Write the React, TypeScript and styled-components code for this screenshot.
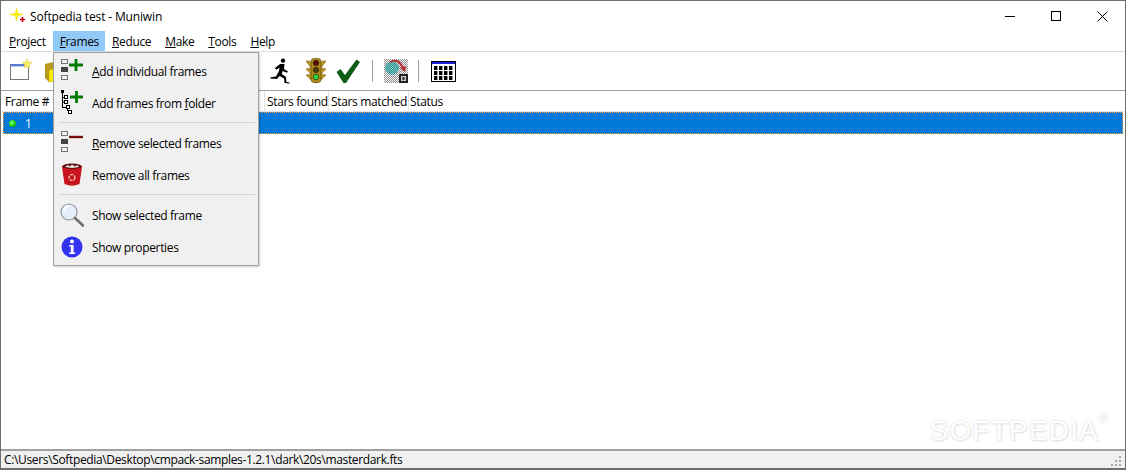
import React from 'react';
import styled, { createGlobalStyle } from 'styled-components';

const Global = createGlobalStyle`
  html, body { margin: 0; padding: 0; background: #fff; }
  body { font-family: "Open Sans", "Noto Sans", sans-serif; font-size: 12px; letter-spacing: -0.35px; color: #000; }
`;

const Window = styled.div`
  position: relative;
  width: 1126px;
  height: 470px;
  box-sizing: border-box;
  display: flex;
  flex-direction: column;
  background: #fff;
  border: 1px solid #6e6e6e;
  border-bottom: 2px solid #6e6e6e;
  overflow: hidden;
`;

const TitleBar = styled.div`
  height: 30px;
  display: flex;
  align-items: center;
  padding-left: 9px;
  flex: none;
`;

const TitleText = styled.span`
  margin-left: 2px;
  flex: 1;
  letter-spacing: -0.15px;
`;

const WinButton = styled.div`
  width: 46px;
  height: 30px;
  display: flex;
  align-items: center;
  justify-content: center;
`;

const MenuBar = styled.div`
  height: 21px;
  box-sizing: border-box;
  display: flex;
  flex: none;
  padding-left: 1px;
  border-bottom: 1px solid #dcdcdc;
`;

const MenuItem = styled.div<{ $active?: boolean }>`
  height: 20px;
  padding: 0 ${(p) => (p.$active ? 6 : 7)}px 0 7px;
  display: flex;
  align-items: center;
  background: ${(p) => (p.$active ? '#91c9f7' : 'transparent')};
  u { text-underline-offset: 1px; }
`;

const Toolbar = styled.div`
  height: 39px;
  box-sizing: border-box;
  display: flex;
  align-items: center;
  flex: none;
  padding-left: 3px;
  border-bottom: 1px solid #a0a0a0;
`;

const ToolButton = styled.div<{ $w?: number }>`
  width: ${(p) => p.$w ?? 34}px;
  height: 32px;
  display: flex;
  align-items: center;
  justify-content: center;
  flex: none;
`;

const ToolSep = styled.div`
  width: 1px;
  height: 22px;
  background: #a0a0a0;
  margin: 0 11px 0 10px;
  flex: none;
`;

const ListArea = styled.div`
  flex: 1;
  display: flex;
  flex-direction: column;
  min-height: 0;
`;

const HeaderRow = styled.div`
  height: 21px;
  box-sizing: border-box;
  display: flex;
  flex: none;
  border-bottom: 1px solid #e5e5e5;
`;

const HeaderCell = styled.div<{ $w: number; $pad: number; $last?: boolean }>`
  width: ${(p) => p.$w}px;
  box-sizing: border-box;
  padding-left: ${(p) => p.$pad}px;
  display: flex;
  align-items: center;
  flex: none;
  white-space: nowrap;
  border-right: 1px solid ${(p) => (p.$last ? 'transparent' : '#e2e2e2')};
`;

const SelectedRow = styled.div`
  height: 22px;
  margin: 0 2px;
  display: flex;
  align-items: center;
  flex: none;
  color: #fff;
  background: #0078d7;
  outline: 1px dotted #ff9a3c;
  outline-offset: -1px;
`;

const RowNumber = styled.span`
  margin-left: 9px;
`;

const RowDot = styled.span`
  width: 7px;
  height: 7px;
  margin-left: 6px;
  border-radius: 50%;
  background: radial-gradient(circle at 40% 40%, #8dff7a, #10d010 55%, #067a06);
`;

const StatusBar = styled.div`
  height: 19px;
  box-sizing: border-box;
  flex: none;
  display: flex;
  align-items: center;
  padding-left: 3px;
  background: #f0f0f0;
  border-top: 2px solid #a0a0a0;
`;

const Grip = styled.svg`
  position: absolute;
  right: 3px;
  bottom: 1px;
`;

const Watermark = styled.div`
  position: absolute;
  right: 26px;
  bottom: 21px;
  font-family: "Liberation Sans", sans-serif;
  font-size: 28px;
  letter-spacing: 1.2px;
  color: #fff;
  text-shadow: 0 0 3px #d8d8d8, 1px 1px 2px #e4e4e4;
  pointer-events: none;
`;

const WatermarkMark = styled.span`
  position: absolute;
  top: -3px;
  right: -9px;
  font-size: 11px;
`;

const Dropdown = styled.div`
  position: absolute;
  left: 52px;
  top: 51px;
  width: 206px;
  box-sizing: border-box;
  padding: 2px;
  background: #f0f0f0;
  border: 1px solid #a0a0a0;
  box-shadow: 1px 1px 2px rgba(0, 0, 0, 0.2);
`;

const DropItem = styled.div`
  height: 32px;
  display: flex;
  align-items: center;
  u { text-underline-offset: 1px; }
`;

const DropIcon = styled.div`
  width: 32px;
  height: 32px;
  display: flex;
  align-items: center;
  justify-content: center;
  flex: none;
  margin-right: 4px;
`;

const DropSep = styled.div`
  height: 1px;
  margin: 3px 1px 4px 3px;
  background: #d4d4d4;
`;

const Star = () => (
  <svg width="18" height="18" viewBox="0 0 18 18">
    <path d="M6.5 1 L7.7 6.3 L13 7.5 L7.7 8.7 L6.5 14 L5.3 8.7 L0 7.5 L5.3 6.3 Z" fill="#fff200" stroke="#e8d400" strokeWidth="0.5" />
    <path d="M12.5 10 v5 M10 12.5 h5" stroke="#c00010" strokeWidth="1.6" />
  </svg>
);

const Boxes = ({ plus, color }: { plus: boolean; color: string }) => (
  <svg width="26" height="26" viewBox="0 0 26 26">
    <rect x="2.5" y="1.5" width="6" height="4" fill="#f0f0f0" stroke="#777" />
    <rect x="2" y="9" width="7" height="5" fill="#444" />
    <rect x="2.5" y="17.5" width="6" height="4" fill="#f0f0f0" stroke="#777" />
    {plus ? (
      <path d="M10 7 h14 M17 1 v12" stroke={color} strokeWidth="2.8" />
    ) : (
      <path d="M10 7 h14" stroke={color} strokeWidth="2.4" />
    )}
  </svg>
);

const TreePlus = () => (
  <svg width="26" height="26" viewBox="0 0 26 26">
    <rect x="2" y="0" width="3" height="3" fill="#000" />
    <path d="M3.5 3 V18 M3.5 7.5 h2 M3.5 12 h2 M3.5 17.5 h4 M8.5 18 v3" stroke="#000" strokeWidth="1" fill="none" />
    <rect x="5.5" y="5.5" width="3" height="3" fill="#fff" stroke="#000" strokeWidth="1" />
    <rect x="5.5" y="10.5" width="3" height="3" fill="#fff" stroke="#000" strokeWidth="1" />
    <rect x="7.5" y="15.5" width="3" height="3" fill="#fff" stroke="#000" strokeWidth="1" />
    <rect x="9.5" y="20.5" width="3" height="3" fill="#fff" stroke="#000" strokeWidth="1" />
    <path d="M11 7 h13 M17.5 1 v12" stroke="#007a00" strokeWidth="2.8" />
  </svg>
);

const TrashIcon = () => (
  <svg width="22" height="24" viewBox="0 0 22 24">
    <ellipse cx="11" cy="3.5" rx="10" ry="3" fill="#5a0a0a" />
    <path d="M1 4 L3.5 21 Q11 24.5 18.5 21 L21 4 Q11 8 1 4 Z" fill="#c8141c" />
    <path d="M4 4 L7 2 L9 3.5 L11 1.6 L14 3.5 L16 2 L18 4 L11 5 Z" fill="#f1eaea" />
    <circle cx="11" cy="14.5" r="3" fill="none" stroke="#f4dcdc" strokeWidth="1.2" strokeDasharray="3 1" />
  </svg>
);

const MagnifierIcon = () => (
  <svg width="24" height="24" viewBox="0 0 24 24">
    <circle cx="9" cy="9" r="8" fill="#e6eefa" stroke="#8d97a5" strokeWidth="1.2" />
    <path d="M3.5 8 A6 6 0 0 1 9 3" stroke="#fff" strokeWidth="2" fill="none" />
    <path d="M15 15 L23 22.5" stroke="#6e6e6e" strokeWidth="2.6" strokeLinecap="round" />
  </svg>
);

const InfoIcon = () => (
  <svg width="22" height="22" viewBox="0 0 22 22">
    <circle cx="11" cy="11" r="10.5" fill="#3434f0" />
    <circle cx="11" cy="5.6" r="2" fill="#fff" />
    <path d="M8.2 9 h4.4 v7.4 h1.6 v1.6 h-6 v-1.6 h1.6 v-5.8 h-1.6 Z" fill="#fff" />
  </svg>
);

const NewProjectIcon = () => (
  <svg width="24" height="24" viewBox="0 0 24 24">
    <rect x="1.5" y="5.5" width="18" height="15" fill="#fff" stroke="#777" />
    <rect x="1" y="5" width="19" height="2.4" fill="#5c7cd0" />
    <path d="M18 0 L19.4 3 L23 3.4 L20.4 5.6 L21 9 L18 7.4 L15 9 L15.6 5.6 L13 3.4 L16.6 3 Z" fill="#f8ec60" stroke="#d8c840" strokeWidth="0.5" />
  </svg>
);

const FolderIcon = () => (
  <svg width="24" height="26" viewBox="0 0 24 26">
    <path d="M2 6 L14 3 L16 8 V21 L6 24 L2 20 Z" fill="#b89a20" />
    <path d="M6 12 L20 9 L18 22 L6 24 Z" fill="#f8f000" stroke="#b8a000" strokeWidth="0.5" />
    <path d="M10 2 L15 1 L16 4 Z" fill="#2d9a3a" />
  </svg>
);

const RunnerIcon = () => (
  <svg width="24" height="26" viewBox="0 0 24 26">
    <circle cx="14" cy="2.6" r="2.2" fill="#000" />
    <path d="M11 6 L15.5 6 L15 11 L19 13.5 L18 14.8 L13.6 13 L12.8 16 L17 19 L17.5 24 L20.5 24.6 L20.5 25.6 L15.6 25 L15 20.5 L10.5 18 L8 21 L1.5 20.4 L1.5 19.2 L7 18.6 L10 13 L10.5 9.5 L8 11.5 L5.5 10.5 Z" fill="#000" />
  </svg>
);

const TrafficIcon = () => (
  <svg width="22" height="26" viewBox="0 0 22 26">
    <path d="M1 3 H5 L7 7 H15 L17 3 H21 L16 10 L21 11 L16 16 L21 17 L15 23 L11 25 L7 23 L1 17 L6 16 L1 11 L6 10 Z" fill="#c49a24" stroke="#6e5410" strokeWidth="0.5" />
    <rect x="6" y="0.5" width="10" height="24" rx="3" fill="#b08a1e" stroke="#5a4408" strokeWidth="0.6" />
    <circle cx="11" cy="5" r="2.8" fill="#5a0c0c" stroke="#2c2004" strokeWidth="0.6" />
    <circle cx="11" cy="12" r="2.8" fill="#4c3c10" stroke="#2c2004" strokeWidth="0.6" />
    <circle cx="11" cy="19" r="2.8" fill="#22d840" stroke="#2c2004" strokeWidth="0.6" />
  </svg>
);

const CheckIcon = () => (
  <svg width="24" height="24" viewBox="0 0 24 24">
    <path d="M0.5 13 L4.5 10 L9 16 L20.5 0.5 L24 3 L10 24 H7.5 Z" fill="#0f5c14" />
  </svg>
);

const MatchIcon = () => (
  <svg width="24" height="24" viewBox="0 0 24 24">
    <defs>
      <pattern id="chk" width="2" height="2" patternUnits="userSpaceOnUse">
        <rect width="2" height="2" fill="#fff" />
        <rect width="1" height="1" fill="#8a8a8a" />
        <rect x="1" y="1" width="1" height="1" fill="#8a8a8a" />
      </pattern>
    </defs>
    <rect width="24" height="24" fill="url(#chk)" />
    <ellipse cx="8" cy="9" rx="7" ry="6.5" fill="#3aa5a0" opacity="0.8" />
    <path d="M6 3 C11 0 16 2 19 9" stroke="#b83030" strokeWidth="2" fill="none" />
    <path d="M21 13 L16 9 L22 7 Z" fill="#b83030" />
    <rect x="15" y="15" width="9" height="9" fill="#222" />
    <rect x="17" y="17" width="5" height="5" fill="#ccc" />
    <rect x="18.5" y="18" width="2" height="3" fill="#222" />
  </svg>
);

const TableIcon = () => (
  <svg width="25" height="21" viewBox="0 0 25 21">
    <rect x="0.5" y="0.5" width="24" height="20" fill="#fff" stroke="#000" />
    <rect x="1" y="1" width="23" height="2" fill="#2020e0" />
    {[5, 10, 15].map((y) =>
      [3, 8, 13, 18].map((x) => <rect key={`${x}-${y}`} x={x} y={y} width="3.4" height="4" fill="#000" />)
    )}
  </svg>
);

const columns = [
  { label: 'Frame #', w: 264, pad: 4 },
  { label: 'Stars found', w: 64, pad: 2 },
  { label: 'Stars matched', w: 80, pad: 2 },
  { label: 'Status', w: 80, pad: 1, last: true },
];

export default function App() {
  return (
    <Window>
      <Global />
      <TitleBar>
        <Star />
        <TitleText>Softpedia test - Muniwin</TitleText>
        <WinButton>
          <svg width="10" height="10"><path d="M0 5.5 H10" stroke="#000" /></svg>
        </WinButton>
        <WinButton>
          <svg width="10" height="10"><rect x="0.5" y="0.5" width="9" height="9" fill="none" stroke="#000" /></svg>
        </WinButton>
        <WinButton>
          <svg width="11" height="11"><path d="M0.5 0.5 L10.5 10.5 M10.5 0.5 L0.5 10.5" stroke="#000" /></svg>
        </WinButton>
      </TitleBar>
      <MenuBar>
        <MenuItem><span><u>P</u>roject</span></MenuItem>
        <MenuItem $active><span><u>F</u>rames</span></MenuItem>
        <MenuItem><span><u>R</u>educe</span></MenuItem>
        <MenuItem><span><u>M</u>ake</span></MenuItem>
        <MenuItem><span><u>T</u>ools</span></MenuItem>
        <MenuItem><span><u>H</u>elp</span></MenuItem>
      </MenuBar>
      <Toolbar>
        <ToolButton><NewProjectIcon /></ToolButton>
        <ToolButton><FolderIcon /></ToolButton>
        <ToolButton $w={192} />
        <ToolButton><RunnerIcon /></ToolButton>
        <ToolButton $w={36}><TrafficIcon /></ToolButton>
        <ToolButton $w={28}><CheckIcon /></ToolButton>
        <ToolSep />
        <ToolButton $w={24}><MatchIcon /></ToolButton>
        <ToolSep />
        <ToolButton $w={26}><TableIcon /></ToolButton>
      </Toolbar>
      <ListArea>
        <HeaderRow>
          {columns.map((c) => (
            <HeaderCell key={c.label} $w={c.w} $pad={c.pad} $last={c.last}>{c.label}</HeaderCell>
          ))}
        </HeaderRow>
        <SelectedRow>
          <RowDot />
          <RowNumber>1</RowNumber>
        </SelectedRow>
      </ListArea>
      <StatusBar>C:\Users\Softpedia\Desktop\cmpack-samples-1.2.1\dark\20s\masterdark.fts</StatusBar>
      <Grip width="12" height="12" viewBox="0 0 12 12">
        <path d="M9 1h2v2H9zM5 5h2v2H5zM9 5h2v2H9zM1 9h2v2H1zM5 9h2v2H5zM9 9h2v2H9z" fill="#a8a8a8" />
      </Grip>
      <Watermark>SOFTPEDIA<WatermarkMark>®</WatermarkMark></Watermark>
      <Dropdown>
        <DropItem>
          <DropIcon><Boxes plus color="#007a00" /></DropIcon>
          <span><u>A</u>dd individual frames</span>
        </DropItem>
        <DropItem>
          <DropIcon><TreePlus /></DropIcon>
          <span>Add frames from <u>f</u>older</span>
        </DropItem>
        <DropSep />
        <DropItem>
          <DropIcon><Boxes plus={false} color="#7a1010" /></DropIcon>
          <span><u>R</u>emove selected frames</span>
        </DropItem>
        <DropItem>
          <DropIcon><TrashIcon /></DropIcon>
          <span>Remove all frames</span>
        </DropItem>
        <DropSep />
        <DropItem>
          <DropIcon><MagnifierIcon /></DropIcon>
          <span>Show selected frame</span>
        </DropItem>
        <DropItem>
          <DropIcon><InfoIcon /></DropIcon>
          <span>Show properties</span>
        </DropItem>
      </Dropdown>
    </Window>
  );
}
